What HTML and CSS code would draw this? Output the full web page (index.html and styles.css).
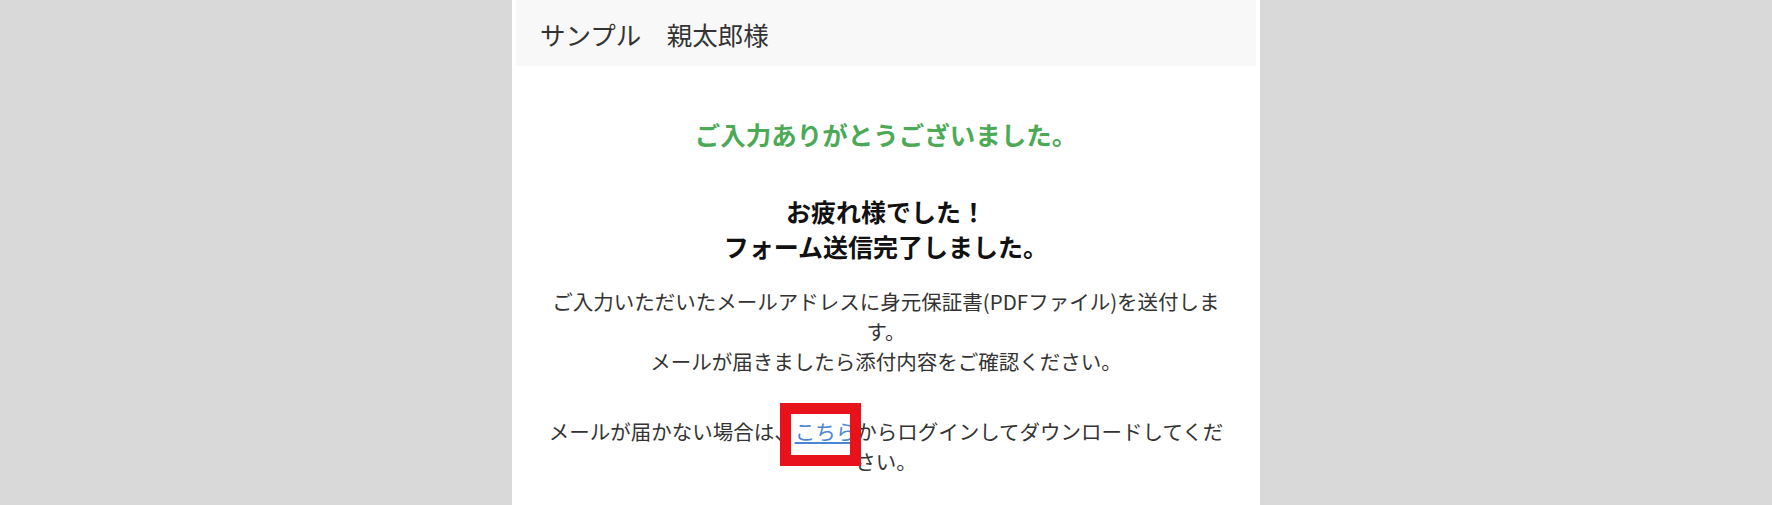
FILE: index.html
```html
<!DOCTYPE html>
<html lang="ja">
  <head>
    <meta charset="UTF-8" />
    <meta name="viewport" content="width=device-width, initial-scale=1.0" />
    <title>フォーム送信完了</title>
    <link rel="stylesheet" href="styles.css">
  </head>
  <body>
    <div class="page">
      <!-- ヘッダー -->
      <header class="header">サンプル　親太郎様</header>

      <main class="content">
        <p class="thanks">ご入力ありがとうございました。</p>

        <h2 class="done">お疲れ様でした！<br />フォーム送信完了しました。</h2>

        <p class="note note-first">
          ご入力いただいたメールアドレスに身元保証書(PDFファイル)を送付します。<br />メールが届きましたら添付内容をご確認ください。
        </p>

        <p class="note note-second">
          メールが届かない場合は、<a href="#" class="login-link">こちら</a>からログインしてダウンロードしてください。
        </p>
      </main>
    </div>
  </body>
</html>
```

FILE: styles.css
```css
body {
  background: #d9d9d9;
  font-family: "Noto Sans CJK JP", "Noto Sans", sans-serif;
  margin: 0;
  color: #333;
}
.page {
  background-color: #fff;
  width: 748px;
  min-height: 100vh;
  margin: 0 auto;
}
.header {
  background-color: #f8f8f8;
  margin: 0 4px;
  height: 66px;
  padding-left: 24px;
  display: flex;
  align-items: center;
  font-size: 25.5px;
  color: #333;
}
.content {
  padding: 0 10px;
  text-align: center;
}
.thanks {
  margin: 50px 0 0;
  font-size: 25.5px;
  line-height: 36px;
  font-weight: bold;
  color: #4caa57;
}
.done {
  margin: 42px 0 0;
  font-size: 25px;
  line-height: 35px;
  font-weight: bold;
  color: #111;
}
.note {
  font-size: 20.5px;
  line-height: 30px;
  margin: 0 auto;
}
.note-first {
  margin-top: 22px;
  max-width: 684px;
}
.note-second {
  margin-top: 40px;
  max-width: 690px;
}
.login-link {
  position: relative;
  color: #4a86d4;
  text-decoration: underline;
}
/* 赤枠の注記 */
.login-link::after {
  content: "";
  position: absolute;
  left: -15px;
  top: -13px;
  width: 81px;
  height: 63px;
  box-sizing: border-box;
  border: 11px solid #e8121a;
}
```
